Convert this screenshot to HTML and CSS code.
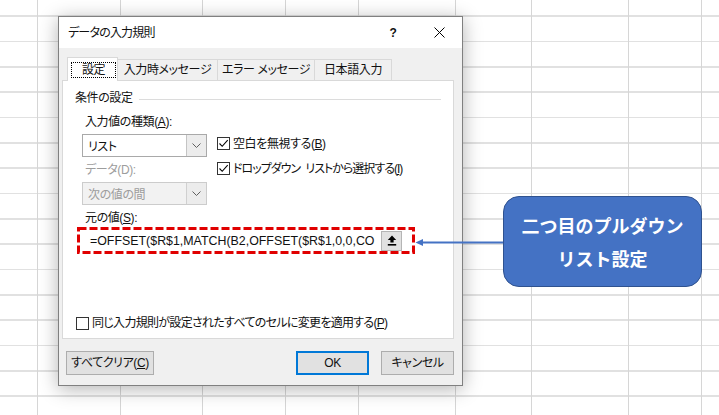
FILE: index.html
```html
<!DOCTYPE html>
<html lang="ja">
<head>
<meta charset="utf-8">
<title>データの入力規則</title>
<link rel="stylesheet" href="styles.css">
</head>
<body>
<div class="sheet">
  <div class="dialog">
    <div class="titlebar">
      <span class="title">データの入力規則</span>
      <span class="help">?</span>
      <span class="close"><svg width="11" height="11" viewBox="0 0 11 11"><path d="M0.5 0.5 L10.5 10.5 M10.5 0.5 L0.5 10.5" stroke="#000" stroke-width="1" fill="none"/></svg></span>
    </div>
    <div class="dlg-body">
      <div class="tabs">
        <div class="tab active"><span class="focus">設定</span></div>
        <div class="tab t2">入力時メッセージ</div>
        <div class="tab t3">エラー メッセージ</div>
        <div class="tab t4">日本語入力</div>
      </div>
      <div class="panel">
        <div class="group-title"><span class="gt-text">条件の設定</span><i class="rule"></i></div>
        <div class="group">
          <div class="label">入力値の種類(<u>A</u>):</div>
          <div class="row">
            <div class="col">
              <div class="combo"><span class="combo-text">リスト</span><span class="combo-btn"><svg width="9" height="5" viewBox="0 0 9 5"><path d="M0.5 0.5 L4.5 4.5 L8.5 0.5" stroke="#5f5f5f" fill="none"/></svg></span></div>
              <div class="label disabled lbl-data">データ(D):</div>
              <div class="combo combo-disabled"><span class="combo-text">次の値の間</span><span class="combo-btn"><svg width="9" height="5" viewBox="0 0 9 5"><path d="M0.5 0.5 L4.5 4.5 L8.5 0.5" stroke="#5f5f5f" fill="none"/></svg></span></div>
            </div>
            <div class="checks">
              <div class="check"><span class="box"><svg width="11" height="11" viewBox="0 0 11 11"><path d="M1.5 5.5 L4.2 8.3 L9.7 2.2" stroke="#000" stroke-width="1.1" fill="none"/></svg></span><span>空白を無視する(<u>B</u>)</span></div>
              <div class="check check2"><span class="box"><svg width="11" height="11" viewBox="0 0 11 11"><path d="M1.5 5.5 L4.2 8.3 L9.7 2.2" stroke="#000" stroke-width="1.1" fill="none"/></svg></span><span>ドロップダウン リストから選択する(<u>I</u>)</span></div>
            </div>
          </div>
          <div class="label lbl-src">元の値(<u>S</u>):</div>
          <div class="source">
            <span class="src-text">=OFFSET($R$1,MATCH(B2,OFFSET($R$1,0,0,CO</span>
            <span class="ref-btn"><svg width="10" height="11" viewBox="0 0 10 11"><path d="M5 0.5 L9.2 5 L6.6 5 L6.6 7.5 L3.4 7.5 L3.4 5 L0.8 5 Z" fill="#000"/><rect x="0.8" y="9" width="8.4" height="1.6" fill="#000"/></svg></span>
          </div>
        </div>
        <div class="check apply"><span class="box"></span><span>同じ入力規則が設定されたすべてのセルに変更を適用する(<u>P</u>)</span></div>
      </div>
      <div class="buttons">
        <span class="btn btn-clear">すべてクリア(<u>C</u>)</span>
        <span class="btn-spacer"></span>
        <span class="btn btn-ok">OK</span>
        <span class="btn btn-cancel">キャンセル</span>
      </div>
    </div>
  </div>

  <svg class="dash-frame" width="340" height="30" viewBox="0 0 340 30"><rect x="2.5" y="2.5" width="335" height="24" fill="none" stroke="#e00000" stroke-width="3" stroke-dasharray="8 3"/></svg>
  <svg class="arrow" width="92" height="14" viewBox="0 0 92 14"><path d="M10 6.5 L92 6.5" stroke="#4472c4" stroke-width="2"/><path d="M3.5 6.5 L11 3 L11 10 Z" fill="#4472c4"/></svg>
  <div class="callout"><span>二つ目のプルダウン</span><span>リスト設定</span></div>
</div>
</body>
</html>
```
FILE: styles.css
```css
html, body {
  margin: 0;
  padding: 0;
}
body {
  font-family: "Liberation Sans", "Noto Sans CJK JP", sans-serif;
  color: #000;
}
.sheet {
  position: relative;
  width: 719px;
  height: 415px;
  overflow: hidden;
  background-color: #fff;
  background-image:
    linear-gradient(#d6d6d6, #d6d6d6),
    linear-gradient(#d6d6d6, #d6d6d6),
    linear-gradient(#d6d6d6, #d6d6d6),
    linear-gradient(#d6d6d6, #d6d6d6),
    linear-gradient(#d6d6d6, #d6d6d6),
    linear-gradient(#d6d6d6, #d6d6d6),
    linear-gradient(#d6d6d6, #d6d6d6),
    linear-gradient(#d6d6d6, #d6d6d6),
    linear-gradient(#d6d6d6, #d6d6d6),
    repeating-linear-gradient(to bottom, transparent 0, transparent 15.2px, #e1e1e1 15.2px, #e1e1e1 16.9px, transparent 16.9px, transparent 25.333px);
  background-size: 1px 100%, 1px 100%, 1px 100%, 1px 100%, 1px 100%, 1px 100%, 1px 100%, 1px 100%, 1px 100%, 100% 100%;
  background-position: 37px 0, 120px 0, 202px 0, 285px 0, 358px 0, 455px 0, 531px 0, 628px 0, 701px 0, 0 0;
  background-repeat: no-repeat;
}
u { text-decoration: underline; text-underline-offset: 1px; }

/* dialog */
.dialog {
  position: absolute;
  left: 58px;
  top: 16px;
  width: 405px;
  height: 370px;
  box-sizing: border-box;
  border: 1px solid #808080;
  background: #f0f0f0;
  display: flex;
  flex-direction: column;
  box-shadow: 0 3px 18px rgba(0, 0, 0, 0.3);
  font-size: 12px;
  font-feature-settings: "palt";
  letter-spacing: -0.4px;
  color: #111;
}
.titlebar {
  height: 31px;
  background: #fff;
  display: flex;
  align-items: center;
  padding-left: 9px;
  flex: none;
}
.title { flex: 1; line-height: 16px; letter-spacing: -0.8px; }
.help, .close {
  width: 46px;
  display: flex;
  align-items: center;
  justify-content: center;
  height: 31px;
}
.help { font-size: 12px; font-weight: bold; font-family: "Liberation Sans", sans-serif; }
.dlg-body {
  flex: 1;
  display: flex;
  flex-direction: column;
  padding: 9px 8px 10px 3px;
}
.tabs {
  display: flex;
  align-items: flex-end;
  height: 24px;
  margin-bottom: -1px;
  margin-left: 5px;
  flex: none;
}
.tab {
  box-sizing: border-box;
  height: 21px;
  margin-bottom: 1px;
  border: 1px solid #d9d9d9;
  border-bottom: none;
  background: #f0f0f0;
  display: flex;
  align-items: center;
  justify-content: center;
  line-height: 16px;
  margin-left: -1px;
}
.tab.active {
  position: relative;
  z-index: 1;
  height: 24px;
  margin-bottom: 0;
  margin-left: 0;
  width: 51px;
  background: #fff;
  padding: 4px 1px 3px 3px;
  align-items: stretch;
}
.focus {
  flex: 1;
  border: 1px dotted #000;
  display: flex;
  align-items: center;
  justify-content: center;
}
.t2 { width: 101px; }
.t3 { width: 98px; }
.t4 { width: 78px; }
.panel {
  position: relative;
  height: 259px;
  box-sizing: border-box;
  border: 1px solid #d9d9d9;
  background: #fff;
  display: flex;
  flex-direction: column;
  padding: 9px 0 6px 0;
  flex: none;
}
.group-title {
  display: flex;
  align-items: center;
  height: 16px;
  padding-left: 12px;
  line-height: 16px;
}
.rule {
  flex: 1;
  height: 1px;
  background: #dcdcdc;
  margin: 2px 12px 0 6px;
}
.group {
  padding-left: 19px;
}
.label {
  height: 16px;
  line-height: 16px;
  padding-left: 3px;
  margin-top: 8px;
}
.label.disabled { color: #9d9d9d; }
.lbl-data { margin-top: 5px; }
.lbl-src { margin-top: 5px; }
.row {
  display: flex;
  margin-top: 4px;
}
.col { width: 125px; }
.combo {
  box-sizing: border-box;
  height: 23px;
  border: 1px solid #a9a9a9;
  background: #fff;
  display: flex;
  align-items: stretch;
}
.combo-text {
  flex: 1;
  display: flex;
  align-items: center;
  padding-left: 5px;
}
.combo-btn {
  width: 19px;
  border-left: 1px solid #c4c4c4;
  background: #ececec;
  display: flex;
  align-items: center;
  justify-content: center;
}
.combo-disabled {
  margin-top: 4px;
  background: #f2f2f2;
  border-color: #cccccc;
  color: #9d9d9d;
}
.combo-disabled .combo-btn { background: #ececec; border-left-color: #d0d0d0; }
.checks {
  margin-left: 10px;
  display: flex;
  flex-direction: column;
}
.check {
  display: flex;
  align-items: center;
  height: 19px;
  line-height: 16px;
  white-space: nowrap;
}
.check2 { margin-top: 6px; letter-spacing: -1px; word-spacing: 3px; }
.box {
  width: 13px;
  height: 13px;
  box-sizing: border-box;
  border: 1px solid #333;
  background: #fff;
  margin-right: 3px;
  display: flex;
  align-items: center;
  justify-content: center;
  flex: none;
  letter-spacing: 0;
}
.source {
  margin-top: 3px;
  width: 326px;
  height: 23px;
  box-sizing: border-box;
  display: flex;
  align-items: center;
  background: #fff;
}
.src-text {
  flex: 1;
  padding-left: 8px;
  font-family: "Liberation Sans", sans-serif;
  font-size: 12.4px;
  font-feature-settings: normal;
  letter-spacing: 0;
  white-space: nowrap;
  overflow: hidden;
}
.ref-btn {
  width: 21px;
  height: 20px;
  box-sizing: border-box;
  border: 1px solid #b5b5b5;
  background: #e1e1e1;
  margin-right: 6px;
  display: flex;
  align-items: center;
  justify-content: center;
}
.apply {
  margin-top: auto;
  padding-left: 13px;
  height: 18px;
  letter-spacing: -0.7px;
}
.buttons {
  margin-top: 12px;
  display: flex;
  padding-left: 4px;
  height: 24px;
}
.btn {
  box-sizing: border-box;
  height: 24px;
  border: 1px solid #adadad;
  background: #e1e1e1;
  display: flex;
  align-items: center;
  justify-content: center;
  line-height: 16px;
}
.btn-clear { width: 88px; }
.btn-spacer { flex: 1; }
.btn-ok {
  width: 73px;
  border: 2px solid #0078d7;
}
.btn-cancel {
  width: 73px;
  margin-left: 12px;
}

/* annotations */
.dash-frame {
  position: absolute;
  left: 76px;
  top: 226px;
}
.arrow {
  position: absolute;
  left: 412px;
  top: 236px;
}
.callout {
  position: absolute;
  left: 503px;
  top: 196px;
  width: 199px;
  height: 91px;
  box-sizing: border-box;
  background: #4472c4;
  border: 1px solid #2f528f;
  border-radius: 16px;
  color: #fff;
  font-family: "Noto Sans CJK JP", sans-serif;
  font-weight: bold;
  font-size: 18px;
  line-height: 33px;
  display: flex;
  flex-direction: column;
  align-items: center;
  justify-content: center;
}
```
